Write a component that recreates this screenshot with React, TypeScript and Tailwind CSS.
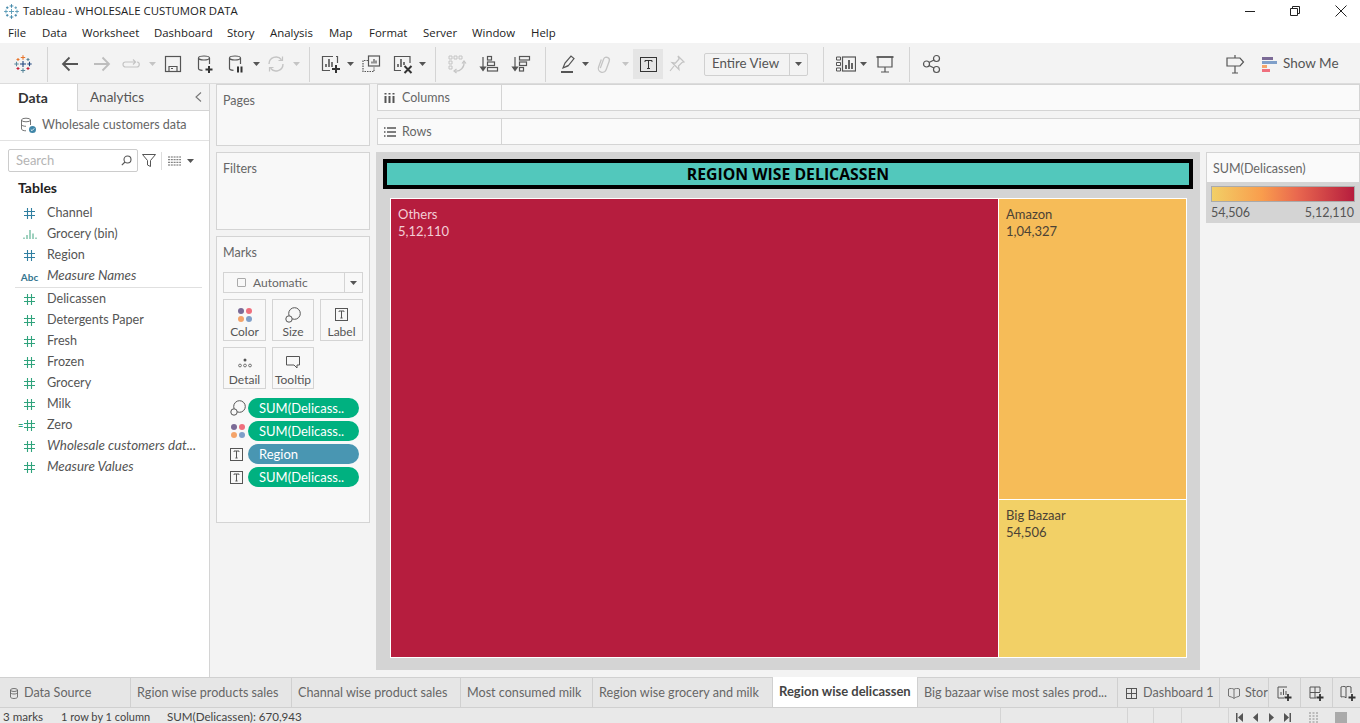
import React from "react";

const ui = "font-['Lato','Liberation_Sans',sans-serif]";
const win = "font-['Open_Sans','Liberation_Sans',sans-serif]";

function Ic({ children, className = "" }: { children: React.ReactNode; className?: string }) {
  return (
    <svg viewBox="0 0 20 20" fill="none" stroke="currentColor" strokeWidth="1.2" className={`w-5 h-5 shrink-0 ${className}`}>
      {children}
    </svg>
  );
}

function Caret({ className = "", light = false }: { className?: string; light?: boolean }) {
  return (
    <svg viewBox="0 0 7 4" className={`w-[7px] h-1 shrink-0 ${light ? "text-[#c4c4c4]" : "text-[#555]"} ${className}`}>
      <path d="M0 0h7L3.5 4z" fill="currentColor" />
    </svg>
  );
}

function Sep({ className = "" }: { className?: string }) {
  return <div className={`w-px h-[35px] bg-[#d4d4d4] shrink-0 ${className}`} />;
}

function Hash({ color }: { color: string }) {
  return (
    <svg viewBox="0 0 11 11" className="w-[11px] h-[11px]" stroke={color} strokeWidth="1.1" fill="none">
      <path d="M3.5 0v11M7.5 0v11M0 3.5h11M0 7.5h11" />
    </svg>
  );
}

function TBox({ className = "" }: { className?: string }) {
  return (
    <svg viewBox="0 0 13 13" className={`w-[13px] h-[13px] shrink-0 ${className}`} fill="none" stroke="#555" strokeWidth="1">
      <rect x=".5" y=".5" width="12" height="12" />
      <path d="M4 3.8V3h5v.8M6.5 3v7M5.4 10h2.2" />
    </svg>
  );
}

function Dots() {
  return (
    <svg viewBox="0 0 16 16" className="w-4 h-4 shrink-0">
      <circle cx="4" cy="4" r="3" fill="#7b6a96" />
      <circle cx="12" cy="4" r="3" fill="#ef6f7d" />
      <circle cx="4" cy="12" r="3" fill="#f4a46a" />
      <circle cx="12" cy="12" r="3" fill="#7f9fc9" />
    </svg>
  );
}

function SizeIcon() {
  return (
    <svg viewBox="0 0 16 16" className="w-4 h-4 shrink-0" fill="none" stroke="#555" strokeWidth="1">
      <circle cx="9.5" cy="6.5" r="5.8" fill="#f8f8f8" />
      <circle cx="4" cy="12" r="3.2" fill="#f8f8f8" />
    </svg>
  );
}

function LogoCross({ x, y, c, s = 2 }: { x: number; y: number; c: string; s?: number }) {
  return <path d={`M${x - s} ${y}h${s * 2}M${x} ${y - s}v${s * 2}`} stroke={c} strokeWidth="1.1" fill="none" />;
}

function TableauLogo({ mono = false, className = "" }: { mono?: boolean; className?: string }) {
  const a = mono ? "#3f86a8" : "#e8762d";
  const b = mono ? "#3f86a8" : "#c72037";
  const c = mono ? "#5b9cb8" : "#5b879b";
  const d = mono ? "#5b9cb8" : "#1f457e";
  const e = mono ? "#3f86a8" : "#59879b";
  return (
    <svg viewBox="0 0 20 20" className={`w-5 h-5 shrink-0 ${className}`}>
      <LogoCross x={10} y={10} c={d} s={3} />
      <LogoCross x={10} y={3.5} c={a} s={2.2} />
      <LogoCross x={10} y={16.5} c={e} s={2.2} />
      <LogoCross x={3.5} y={10} c={c} s={2.2} />
      <LogoCross x={16.5} y={10} c={d} s={2.2} />
      <LogoCross x={5} y={5.5} c={a} s={1.5} />
      <LogoCross x={15} y={5.5} c={c} s={1.5} />
      <LogoCross x={5} y={14.5} c={b} s={1.5} />
      <LogoCross x={15} y={14.5} c={b} s={1.5} />
    </svg>
  );
}

function Toolbar() {
  return (
    <div className="h-[41px] bg-[#f3f3f3] flex items-center shrink-0 border-b border-[#dcdcdc] text-[#555] pl-[13px] pr-[23px] pt-[2px]">
      <TableauLogo />
      <Sep className="ml-[14px]" />
      <Ic className="ml-3"><path d="M18 10H3M9.5 3.5 3 10l6.5 6.5" strokeWidth="1.8" /></Ic>
      <Ic className="ml-3 text-[#bdbdbd]"><path d="M2 10h15M10.5 3.5 17 10l-6.5 6.5" strokeWidth="1.8" /></Ic>
      <Ic className="ml-[9px] text-[#c4c4c4]"><path d="M14 8H4.5a2.5 2.5 0 0 0 0 5h11a2.5 2.5 0 0 0 .5-5M12 5.5 14.5 8 12 10.5" /></Ic>
      <Caret light className="ml-2" />
      <Ic className="ml-[7px]"><rect x="2.5" y="2.5" width="15" height="15" /><path d="M6 17.5v-5h8v5" /><path d="M8 14.5h2" /></Ic>
      <Ic className="ml-3"><ellipse cx="9" cy="4" rx="5.5" ry="2" /><path d="M3.5 4v10.5c0 1 1.5 1.7 4 1.9M14.5 4v6" /><path d="M14 12v7M10.5 15.5h7" strokeWidth="2" stroke="#333" /></Ic>
      <Ic className="ml-[11px]"><ellipse cx="9" cy="4" rx="5.5" ry="2" /><path d="M3.5 4v10.5c0 1 1.5 1.7 4 1.9M14.5 4v6" /><path d="M12 12.5v6M15.5 12.5v6" strokeWidth="2" stroke="#333" /></Ic>
      <Caret className="ml-[7px]" />
      <Ic className="ml-[6px] text-[#c4c4c4]"><path d="M3 10a7 7 0 0 1 12.5-4.3M17 10a7 7 0 0 1-12.5 4.3" strokeWidth="1.4" /><path d="M16.5 2.5v4h-4M3.5 17.5v-4h4" /></Ic>
      <Caret light className="ml-[7px]" />
      <Sep className="ml-[9px]" />
      <Ic className="ml-[11px]"><path d="M12 2.5H1.5v14H9" /><path d="M5 13v-3M8 13V5M11 13V8" strokeWidth="1.6" /><path d="M15 2.5h1.5V9" /><path d="M15 11v8M11 15h8" strokeWidth="2" stroke="#333" /></Ic>
      <Caret className="ml-[6px]" />
      <Ic className="ml-[7px]"><rect x="7.5" y="2" width="11" height="10" /><path d="M11 9.5v-2M13 9.5V5M15 9.5V6.5" /><path d="M7 6.5H2v11h11v-4" strokeDasharray="1.5 1" /></Ic>
      <Ic className="ml-3"><path d="M17 9V2.5H1.5v14H8" /><path d="M5 13v-3M8 13V5M11 11V8" strokeWidth="1.6" /><path d="m11.5 12 7 7M18.5 12l-7 7" strokeWidth="2" stroke="#333" /></Ic>
      <Caret className="ml-[6px]" />
      <Sep className="ml-[9px]" />
      <Ic className="ml-[11px] text-[#c4c4c4]"><path d="M2 2h3v3H2zM7 2h3v3H7zM12 2h3v3h-3zM2 7h3v3H2zM2 12h3v3H2z" strokeWidth="1" /><path d="M17 8a8 8 0 0 1-9 9" /><path d="M15 9.5 17 7l2 2.5M9.5 15 7 17l2.5 2" /></Ic>
      <Ic className="ml-3"><path d="M4 3v13" /><path d="m1.5 13 2.5 3.5 2.5-3.500z" fill="currentColor" /><rect x="8.500" y="2.500" width="4" height="3.500" /><rect x="8.500" y="8" width="7" height="3.500" /><rect x="8.500" y="13.500" width="10" height="3.500" /></Ic>
      <Ic className="ml-3"><path d="M4 3v13" /><path d="m1.500 13 2.500 3.500 2.500-3.500z" fill="currentColor" /><rect x="8.500" y="2.500" width="10" height="3.500" /><rect x="8.500" y="8" width="7" height="3.500" /><rect x="8.500" y="13.500" width="4" height="3.500" /></Ic>
      <Sep className="ml-[14px]" />
      <Ic className="ml-3"><path d="M5 14 7 9l6-7 3 2.500-6 7.500zM5 14l5-2.500" /><path d="M3 18h12" strokeWidth="2" /></Ic>
      <Caret className="ml-1" />
      <Ic className="ml-[6px] text-[#c4c4c4]"><path d="M7 15.500V6a3 3 0 0 1 6 0v9a4 4 0 0 1-8 0V7" strokeWidth="1.300" transform="rotate(20 10 10)" /></Ic>
      <Caret light className="ml-[7px]" />
      <div className="ml-1 w-[30px] h-[30px] bg-[#e5e5e5] flex items-center justify-center shrink-0">
        <svg viewBox="0 0 17 15" className="w-[17px] h-[15px]" fill="none" stroke="#333" strokeWidth="1">
          <rect x=".5" y=".5" width="16" height="14" />
          <path d="M5 5V3.500h7V5M8.500 3.500v8M7 11.500h3" />
        </svg>
      </div>
      <Ic className="ml-1 text-[#c4c4c4]"><path d="M11 2 17 8l-2 .5-3.500 3.500.5 3.500-7-7 3.500.5L12 5zM7 12l-4 5" /></Ic>
      <div className="ml-[17px] w-[104px] h-[23px] border border-[#d0d0d0] rounded-[2px] flex items-center shrink-0">
        <span className={`${ui} text-[13.3px] text-[#555] flex-1 pl-[7px] leading-none`}>Entire View</span>
        <div className="w-[18px] h-full border-l border-[#d0d0d0] flex items-center justify-center">
          <Caret />
        </div>
      </div>
      <Sep className="ml-[15px]" />
      <Ic className="ml-3"><path d="M.5 3h4v3h-4zM.5 8.500h4v3h-4zM.5 14h4v3h-4z" strokeWidth="1" /><rect x="6.500" y="3" width="13" height="14" /><path d="M10 15v-4M13 15V6M16 15V9" strokeWidth="1.800" /></Ic>
      <Caret className="ml-1" />
      <Ic className="ml-2"><path d="M1.500 3h17" strokeWidth="1.800" /><path d="M3 3v10h14V3M10 13v5M6 18h8" /></Ic>
      <Sep className="ml-[14px]" />
      <Ic className="ml-3"><circle cx="4.500" cy="10" r="3" /><circle cx="14.500" cy="4.500" r="3" /><circle cx="14.500" cy="15.500" r="3" /><path d="m7 8.500 5-2.500M7 11.500l5 2.500" /></Ic>
      <Ic className="ml-auto"><path d="M10 1v3M10 12v7M7 19h6M2 4h13l3.500 4-3.500 4H2z" /></Ic>
      <div className="ml-[17px] flex flex-col gap-[1px] w-[15px] shrink-0">
        <div className="h-[3px] w-[11px] bg-[#7b6a96]" />
        <div className="h-[3px] w-[15px] bg-[#7f9fc9]" />
        <div className="h-[3px] w-[5px] bg-[#f4a46a]" />
        <div className="h-[3px] w-[8px] bg-[#ef6f7d]" />
      </div>
      <span className={`${ui} ml-[6px] w-[54px] text-[13.5px] text-[#555] leading-none whitespace-nowrap`}>Show Me</span>
    </div>
  );
}

const dims = [
  { icon: "hash", name: "Channel" },
  { icon: "bin", name: "Grocery (bin)" },
  { icon: "hash", name: "Region" },
  { icon: "abc", name: "Measure Names", italic: true },
];
const measures = [
  { name: "Delicassen" },
  { name: "Detergents Paper" },
  { name: "Fresh" },
  { name: "Frozen" },
  { name: "Grocery" },
  { name: "Milk" },
  { name: "Zero", calc: true },
  { name: "Wholesale customers dat...", italic: true },
  { name: "Measure Values", italic: true },
];

function FieldRow({ name, italic, icon }: { name: string; italic?: boolean; icon: React.ReactNode }) {
  return (
    <div className="h-[21px] flex items-center">
      <div className="w-[47px] pl-[15px] pr-[3px] flex justify-center items-center shrink-0">{icon}</div>
      <span className={`text-[#555] leading-none whitespace-nowrap ${italic ? "italic text-[13.400px] -mt-[2px]" : "text-[12.600px]"}`}>{name}</span>
    </div>
  );
}

function DataPane() {
  return (
    <div className={`${ui} w-[210px] shrink-0 bg-white border-r border-[#d4d4d4] flex flex-col`}>
      <div className="h-[27px] flex shrink-0">
        <div className="w-[77px] flex items-center pl-[18px] text-[14px] font-bold text-[#333]">Data</div>
        <div className="flex-1 flex items-center justify-between pl-[12px] pr-[7px] bg-[#f3f3f3] border-l border-b border-[#d4d4d4] text-[13.500px] text-[#555]">
          <span>Analytics</span>
          <svg viewBox="0 0 7 10" className="w-[7px] h-[10px]" fill="none" stroke="#777" strokeWidth="1.100">
            <path d="M6 .5 1 5l5 4.500" />
          </svg>
        </div>
      </div>
      <div className="h-[30px] flex items-center pl-[20px] border-b border-[#e2e2e2] shrink-0 pb-[1px]">
        <svg viewBox="0 0 17 17" className="w-[17px] h-[17px] shrink-0" fill="none" stroke="#666" strokeWidth=".9">
          <ellipse cx="6" cy="3" rx="4.500" ry="1.800" />
          <path d="M1.500 3v9c0 1 2 1.800 4.500 1.800M10.500 3v5M1.500 7.500c0 1 2 1.800 4.500 1.800" />
          <circle cx="12.500" cy="12.500" r="3.500" fill="#3f86a8" stroke="none" />
          <path d="m10.800 12.500 1.200 1.200 2.200-2.300" stroke="#fff" />
        </svg>
        <span className="ml-[5px] text-[12.500px] text-[#666]">Wholesale customers data</span>
      </div>
      <div className="flex items-center mt-[8px] ml-[8px] shrink-0">
        <div className="w-[130px] h-[23px] border border-[#ccc] rounded-[2px] flex items-center justify-between pl-[7px] pr-[5px]">
          <span className="text-[13px] text-[#b4b4b4] leading-none">Search</span>
          <svg viewBox="0 0 11 11" className="w-[11px] h-[11px]" fill="none" stroke="#555" strokeWidth="1.100">
            <circle cx="6.500" cy="4.500" r="3.500" />
            <path d="M4 7 .8 10.200" />
          </svg>
        </div>
        <svg viewBox="0 0 14 13" className="w-[14px] h-[13px] ml-[4px]" fill="none" stroke="#555" strokeWidth="1">
          <path d="M.5.500h13L8.500 6.500v6l-3-1.500V6.500z" />
        </svg>
        <div className="w-px h-[18px] bg-[#ddd] ml-[5px]" />
        <svg viewBox="0 0 13 10" className="w-[13px] h-[10px] ml-[6px]" stroke="#666" strokeWidth="1" strokeDasharray="2 .8">
          <path d="M0 1h13M0 3.700h13M0 6.300h13M0 9h13" />
        </svg>
        <Caret className="ml-[6px]" />
      </div>
      <div className="pl-[18px] mt-[6px] text-[14px] font-bold text-[#222] leading-[19px]">Tables</div>
      <div className="mt-[6px]">
        {dims.map((f) => (
          <FieldRow
            key={f.name}
            name={f.name}
            italic={f.italic}
            icon={
              f.icon === "hash" ? (
                <Hash color="#2f7ea0" />
              ) : f.icon === "bin" ? (
                <svg viewBox="0 0 14 9" className="w-[14px] h-[9px]" stroke="#3ea37f" strokeWidth="1">
                  <path d="M1 9V7.500M4 9V5M7 9V0M10 9V3.500M13 9V7.500" />
                </svg>
              ) : (
                <span className="text-[10px] font-bold text-[#35758f] leading-none">Abc</span>
              )
            }
          />
        ))}
      </div>
      <div className="h-px bg-[#e0e0e0] ml-[15px] mr-[7px] mb-[1px]" />
      <div>
        {measures.map((f) => (
          <FieldRow
            key={f.name}
            name={f.name}
            italic={f.italic}
            icon={
              f.calc ? (
                <span className="flex items-center gap-[1px] -ml-[6px]">
                  <span className="text-[9px] font-bold text-[#2fa37c] leading-none">=</span>
                  <Hash color="#2fa37c" />
                </span>
              ) : (
                <Hash color="#2fa37c" />
              )
            }
          />
        ))}
      </div>
    </div>
  );
}

function MarkButton({ label, icon }: { label: string; icon: React.ReactNode }) {
  return (
    <div className="h-[42px] border border-[#d4d4d4] flex flex-col items-center pt-[6px]">
      <div className="h-[17px] flex items-center">{icon}</div>
      <span className="text-[12px] text-[#555] leading-[15px] mt-[1px]">{label}</span>
    </div>
  );
}

function Pill({ label, icon, blue }: { label: string; icon: React.ReactNode; blue?: boolean }) {
  return (
    <div className="flex items-center h-5">
      <div className="w-[25px] pl-[7px] shrink-0 flex">{icon}</div>
      <div className={`w-[111px] h-5 rounded-full ${blue ? "bg-[#4996b2]" : "bg-[#00b180]"} pl-[11px] flex items-center text-[13px] text-white leading-none whitespace-nowrap`}>
        {label}
      </div>
    </div>
  );
}

function ShelvesColumn() {
  return (
    <div className={`${ui} w-[154px] ml-[6px] shrink-0 flex flex-col`}>
      <div className="h-[62px] shrink-0 border border-[#d4d4d4] bg-[#f8f8f8] pl-[6px] pt-[8px] text-[12.500px] text-[#666] leading-[16px]">Pages</div>
      <div className="h-[78px] shrink-0 mt-[6px] border border-[#d4d4d4] bg-[#f8f8f8] pl-[6px] pt-[8px] text-[12.500px] text-[#666] leading-[16px]">Filters</div>
      <div className="h-[287px] shrink-0 mt-[6px] border border-[#d4d4d4] bg-[#f8f8f8] px-[6px] pt-[8px]">
        <div className="text-[12.500px] text-[#666] leading-[16px]">Marks</div>
        <div className="mt-[11px] h-[21px] border border-[#d4d4d4] flex items-center">
          <div className="w-[9px] h-[9px] border border-[#aaa] ml-[13px] rounded-[1px]" />
          <span className="ml-[7px] text-[12px] text-[#666] flex-1 leading-none">Automatic</span>
          <div className="w-[18px] h-full border-l border-[#d4d4d4] flex items-center justify-center">
            <Caret />
          </div>
        </div>
        <div className="mt-[6px] grid grid-cols-[43px_42px_43px] gap-x-[6px] gap-y-[6px]">
          <MarkButton label="Color" icon={<Dots />} />
          <MarkButton label="Size" icon={<SizeIcon />} />
          <MarkButton label="Label" icon={<TBox />} />
          <MarkButton
            label="Detail"
            icon={
              <svg viewBox="0 0 14 10" className="w-[14px] h-[10px]" fill="none" stroke="#555" strokeWidth=".8">
                <circle cx="7" cy="2" r="1.500" fill="#555" stroke="none" />
                <circle cx="2" cy="7.500" r="1.400" />
                <circle cx="7" cy="7.500" r="1.400" />
                <circle cx="12" cy="7.500" r="1.400" />
              </svg>
            }
          />
          <MarkButton
            label="Tooltip"
            icon={
              <svg viewBox="0 0 14 13" className="w-[14px] h-[13px]" fill="none" stroke="#555" strokeWidth="1">
                <path d="M.5.500h13v8.500h-2.500v3L8 9H.5z" />
              </svg>
            }
          />
        </div>
        <div className="mt-[9px] flex flex-col gap-[3px]">
          <Pill label="SUM(Delicass.." icon={<SizeIcon />} />
          <Pill label="SUM(Delicass.." icon={<Dots />} />
          <Pill label="Region" blue icon={<TBox />} />
          <Pill label="SUM(Delicass.." icon={<TBox />} />
        </div>
      </div>
    </div>
  );
}

function Shelf({ label, icon, className = "" }: { label: string; icon: React.ReactNode; className?: string }) {
  return (
    <div className={`h-[27px] border border-[#d4d4d4] bg-[#fafafa] flex items-center shrink-0 ${className}`}>
      <div className="w-[124px] h-full border-r border-[#d4d4d4] flex items-center pl-[6px] pt-[1px] shrink-0">
        <div className="w-[12px] flex justify-start shrink-0">{icon}</div>
        <span className="ml-[6px] text-[12.500px] text-[#666] leading-none">{label}</span>
      </div>
    </div>
  );
}

function Viz() {
  return (
    <div className="w-[824px] h-[518px] bg-[#d4d4d4] -ml-px p-[7px] flex flex-col shrink-0">
      <div className="h-[30px] border-4 border-black bg-[#52c8bc] flex items-center justify-center shrink-0 pt-[2px]">
        <span className="font-['Open_Sans',sans-serif] text-[15.800px] font-bold text-black leading-none">REGION WISE DELICASSEN</span>
      </div>
      <div className="mt-[9px] ml-[7px] w-[797px] h-[460px] bg-white p-px flex gap-px text-[13px] leading-[17px]">
        <div className="w-[607px] bg-[#b61d3e] pl-[7px] pt-[7px] text-[#f3cdd6]">
          <div>Others</div>
          <div>5,12,110</div>
        </div>
        <div className="w-[187px] flex flex-col gap-px text-[#4b4235]">
          <div className="h-[300px] bg-[#f6bc58] pl-[7px] pt-[7px]">
            <div>Amazon</div>
            <div>1,04,327</div>
          </div>
          <div className="h-[157px] bg-[#f2d066] pl-[7px] pt-[7px]">
            <div>Big Bazaar</div>
            <div>54,506</div>
          </div>
        </div>
      </div>
    </div>
  );
}

function Legend() {
  return (
    <div className="w-[154px] ml-[6px] h-[71px] bg-[#d4d4d4] shrink-0 flex flex-col">
      <div className="h-[30px] bg-[#fafafa] border border-[#d4d4d4] border-b-0 pl-[6px] pt-[3px] flex items-center text-[12.500px] text-[#666] leading-none">SUM(Delicassen)</div>
      <div className="px-[5px] pt-[4px]">
        <div className="h-4 border border-[#aaa] bg-[linear-gradient(90deg,#f2cf66,#f99d4d_35%,#e9684f_60%,#b61d3e)]" />
        <div className="flex justify-between text-[12.500px] text-[#555] leading-[15px] mt-[3px] pr-px">
          <span>54,506</span>
          <span>5,12,110</span>
        </div>
      </div>
    </div>
  );
}

function Tab({ w, active, children }: { w: string; active?: boolean; children: React.ReactNode }) {
  return (
    <div className={`${w} shrink-0 border-r border-[#d0d0d0] flex items-center overflow-hidden whitespace-nowrap ${active ? "bg-white font-bold text-[13px] text-[#444] -mt-px pb-[2px]" : "text-[#666] pt-px"}`}>
      {children}
    </div>
  );
}

function TabBar() {
  return (
    <div className={`${ui} h-[31px] bg-[#e6e6e6] border-t border-b border-[#d0d0d0] flex text-[12.600px] shrink-0 leading-none`}>
      <Tab w="w-[131px]">
        <svg viewBox="0 0 8 11" className="w-2 h-[11px] ml-[10px] mr-[6px]" fill="none" stroke="#666" strokeWidth=".9">
          <ellipse cx="4" cy="2" rx="3.500" ry="1.500" />
          <path d="M.5 2v7c0 .8 1.500 1.500 3.500 1.500S7.500 9.800 7.500 9V2M.5 4.500c0 .8 1.500 1.500 3.500 1.500s3.500-.7 3.500-1.500" />
        </svg>
        Data Source
      </Tab>
      <Tab w="w-[161px]"><span className="pl-[6px]">Rgion wise products sales</span></Tab>
      <Tab w="w-[169px]"><span className="pl-[6px]">Channal wise product sales</span></Tab>
      <Tab w="w-[132px]"><span className="pl-[6px]">Most consumed milk</span></Tab>
      <Tab w="w-[180px]"><span className="pl-[6px]">Region wise grocery and milk</span></Tab>
      <Tab w="w-[145px]" active><span className="pl-[6px]">Region wise delicassen</span></Tab>
      <Tab w="w-[200px]"><span className="pl-[6px]">Big bazaar wise most sales prod...</span></Tab>
      <Tab w="w-[102px]">
        <svg viewBox="0 0 11 11" className="w-[11px] h-[11px] ml-2 mr-[6px]" fill="none" stroke="#555" strokeWidth="1">
          <rect x=".5" y=".5" width="10" height="10" />
          <path d="M5.500.5v10M.5 5.500h10" />
        </svg>
        Dashboard 1
      </Tab>
      <Tab w="w-[49px]">
        <svg viewBox="0 0 12 11" className="w-3 h-[11px] ml-2 mr-[5px] shrink-0" fill="none" stroke="#666" strokeWidth=".9">
          <path d="M.5 1c2-.8 4-.8 5.500.3 1.500-1.100 3.500-1.100 5.500-.3v7c-2 1-4 1-5.500 2.500C4.500 9 2.500 9 .5 8zM6 1.300v9" />
        </svg>
        Story
      </Tab>
      <Tab w="w-[32px]">
        <Ic className="ml-[5px] text-[#555]"><path d="M13 4H4v11h6M7 12V9M9.500 12V6M12 12V8" strokeWidth="1" /><path d="M14 11v7M10.500 14.500h7" strokeWidth="1.800" stroke="#333" /></Ic>
      </Tab>
      <Tab w="w-[32px]">
        <Ic className="ml-[5px] text-[#555]"><path d="M14 9V4H4v11h6M9 4v11M4 9.500h10" strokeWidth="1" /><path d="M14 11v7M10.500 14.500h7" strokeWidth="1.800" stroke="#333" /></Ic>
      </Tab>
      <div className="flex-1 flex items-center">
        <Ic className="ml-[5px] text-[#555]"><path d="M3 4c2-.8 4-.8 5 .3 1-1.100 3-1.100 5-.3v6M3 4v10c2-.5 3.500-.5 5 .8M8 4.300V15" strokeWidth="1" /><path d="M14 11v7M10.500 14.500h7" strokeWidth="1.800" stroke="#333" /></Ic>
      </div>
    </div>
  );
}

function NavArrow({ d }: { d: string }) {
  return (
    <svg viewBox="0 0 7 9" className="w-[7px] h-[9px]" fill="#555">
      <path d={d} />
    </svg>
  );
}

function StatusBar() {
  return (
    <div className={`${ui} h-[15px] shrink-0 bg-[#e9e9e9] flex text-[#444] leading-none overflow-hidden`}>
      <div className="w-[1000px] shrink-0 flex items-center pt-[3px] text-[11.600px]">
        <span className="ml-[3px] w-[58px]">3 marks</span>
        <span className="w-[106px] text-[11px] -mt-px">1 row by 1 column</span>
        <span>SUM(Delicassen): 670,943</span>
      </div>
      <div className="w-[127px] border-l border-[#d4d4d4] shrink-0" />
      <div className="w-[26px] border-l border-[#d4d4d4] shrink-0" />
      <div className="w-[28px] border-l border-[#d4d4d4] shrink-0" />
      <div className="w-[47px] border-l border-[#d4d4d4] shrink-0" />
      <div className="flex-1 border-l border-[#d4d4d4] flex items-center pl-[7px] pt-[3px] gap-[9px]">
        <NavArrow d="M0 0h1.500v9H0zM7 0v9L2 4.500z" />
        <NavArrow d="M6 0v9L1 4.500z" />
        <NavArrow d="M1 0v9l5-4.500z" />
        <NavArrow d="M0 0v9l5-4.500zM5.500 0H7v9H5.500z" />
        <svg viewBox="0 0 11 12" className="ml-[9px] w-[11px] h-[12px] mt-px shrink-0" stroke="#bbb" strokeWidth="2" strokeDasharray="2 1">
          <path d="M1 0v12M4.500 0v12M8 0v12" />
        </svg>
        <div className="ml-[6px] w-[12px] h-[12px] mt-px bg-[#aaa]" />
        <div className="ml-[4px] w-[12px] h-[12px] mt-px bg-[#555]" />
      </div>
    </div>
  );
}

export default function App() {
  const menus: [string, string][] = [
    ["File", "w-[34px]"],
    ["Data", "w-[40px]"],
    ["Worksheet", "w-[72px]"],
    ["Dashboard", "w-[73px]"],
    ["Story", "w-[43px]"],
    ["Analysis", "w-[59px]"],
    ["Map", "w-[40px]"],
    ["Format", "w-[54px]"],
    ["Server", "w-[49px]"],
    ["Window", "w-[59px]"],
    ["Help", "w-[40px]"],
  ];
  return (
    <div className="w-[1360px] h-[723px] overflow-hidden flex flex-col bg-white">
      <div className={`${win} h-[22px] flex items-center shrink-0 pl-[3px]`}>
        <TableauLogo mono className="w-[17px] h-[17px]" />
        <span className="ml-[3px] text-[11.400px] text-[#222] leading-none whitespace-nowrap">Tableau - WHOLESALE CUSTUMOR DATA</span>
        <svg viewBox="0 0 12 12" className="w-3 h-3 ml-auto mr-[33px]" stroke="#222" strokeWidth="1" fill="none"><path d="M1 6.500h10" /></svg>
        <svg viewBox="0 0 12 12" className="w-3 h-3 mr-[34px]" stroke="#222" strokeWidth="1" fill="none"><path d="M1.500 3.500h7v7h-7zM3.500 3.500v-2h7v7h-2" /></svg>
        <svg viewBox="0 0 12 12" className="w-3 h-3 mr-[13px]" stroke="#222" strokeWidth="1" fill="none"><path d="m.5.500 11 11M11.500.500l-11 11" /></svg>
      </div>
      <div className={`${win} h-[21px] flex items-center shrink-0 pl-2 text-[11.400px] text-[#222] leading-none`}>
        {menus.map(([m, w]) => (
          <span key={m} className={w}>{m}</span>
        ))}
      </div>
      <Toolbar />
      <div className="flex-1 flex bg-[#f3f3f3] min-h-0">
        <DataPane />
        <ShelvesColumn />
        <div className={`${ui} ml-[7px] flex-1 flex flex-col min-w-0`}>
          <Shelf
            label="Columns"
            icon={
              <svg viewBox="0 0 11 10" className="w-[11px] h-[10px]" stroke="#555" strokeWidth="2">
                <path d="M1.500 0v1.500M5.500 0v1.500M9.500 0v1.500M1.500 3v7M5.500 3v7M9.500 3v7" />
              </svg>
            }
          />
          <Shelf
            className="mt-[7px]"
            label="Rows"
            icon={
              <svg viewBox="0 0 12 10" className="w-3 h-[10px]" stroke="#555" strokeWidth="1.500">
                <path d="M0 1h1.500M3 1h9M0 5h1.500M3 5h9M0 9h1.500M3 9h9" />
              </svg>
            }
          />
          <div className="mt-[7px] flex">
            <Viz />
            <Legend />
          </div>
        </div>
      </div>
      <TabBar />
      <StatusBar />
    </div>
  );
}
